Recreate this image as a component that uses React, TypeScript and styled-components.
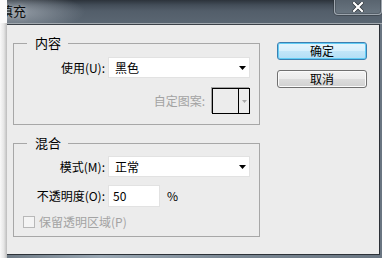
import React from 'react';
import styled, { createGlobalStyle } from 'styled-components';

const Global = createGlobalStyle`
  html, body { margin: 0; padding: 0; background: #fff; }
  body {
    width: 382px; height: 258px; overflow: hidden;
    font-family: "Noto Sans CJK SC", "Noto Sans", "Liberation Sans", sans-serif;
    font-size: 12px; color: #000;
  }
  * { box-sizing: border-box; }
`;

const Screen = styled.div`
  display: flex;
  width: 382px;
  height: 258px;
`;

const Strip = styled.div`
  flex: 0 0 7px;
  display: flex;
  flex-direction: column;
`;

const StripTop = styled.div`
  height: 23px;
  background: #fbfbfb;
`;

const StripBody = styled.div`
  flex: 1;
  background: linear-gradient(to right, #f9f9f9 0%, #e6e6e6 55%, #bcbcbc 100%);
`;

const Window = styled.div`
  flex: 1;
  min-width: 0;
  display: flex;
  flex-direction: column;
  overflow: hidden;
  background: linear-gradient(to right, #6e7a85, #9aa8b4 25%, #7a8793 60%, #6a7682);
`;

const TitleBar = styled.div`
  flex: none;
  height: 24px;
  display: flex;
  align-items: flex-start;
  justify-content: space-between;
  border-bottom: 1px solid #a3aab0;
  background:
    radial-gradient(ellipse 70px 20px at 8px 12px, rgba(175, 182, 190, 0.7), rgba(175, 182, 190, 0) 100%),
    linear-gradient(to bottom, #2c333b 0px, #434d58 5px, #535e6a 11px, #5a6672 23px);
`;

const Title = styled.div`
  margin: 3px 0 0 -7px;
  font-size: 13px;
  line-height: 16px;
  color: #0b0b0b;
  text-shadow: 0 0 5px rgba(255, 255, 255, 0.45);
`;

const CloseButton = styled.div`
  width: 48px;
  height: 16px;
  margin-top: -1px;
  display: flex;
  align-items: center;
  justify-content: center;
  padding-top: 1px;
  border: 1px solid rgba(225, 230, 235, 0.5);
  border-top: none;
  border-radius: 0 0 4px 4px;
  box-shadow: 0 0 0 1px rgba(40, 46, 52, 0.45), inset 0 0 0 1px rgba(40, 46, 52, 0.3);
  background: linear-gradient(to bottom, #58636e, #6a7681);
`;

const Client = styled.div`
  flex: 1;
  display: flex;
  align-items: flex-start;
  margin: 0 2px 3px 0;
  padding: 9px 11px 0 6px;
  background: #ececec;
  border-top: 1px solid #3b4148;
  border-right: 1px solid #2c3137;
  border-bottom: 1px solid #2c3137;
`;

const LeftColumn = styled.div`
  flex: 0 0 247px;
  display: flex;
  flex-direction: column;
`;

const Group = styled.fieldset<{ $gap: number; $pt: number; $pb: number }>`
  margin: ${p => p.$gap}px 0 0 0;
  padding: ${p => p.$pt}px 9px ${p => p.$pb}px 0;
  border: 1px solid #a7a7a7;
  min-width: 0;
`;

const Legend = styled.legend`
  margin-left: 13px;
  padding: 0 7px 0 8px;
  font-size: 13px;
  line-height: 18px;
  color: #000;
`;

const Rows = styled.div<{ $gap: number }>`
  display: flex;
  flex-direction: column;
  gap: ${p => p.$gap}px;
`;

const FieldRow = styled.div`
  display: flex;
  align-items: center;
  gap: 3px;
`;

const Label = styled.div`
  flex: 0 0 91px;
  text-align: right;
  line-height: 16px;
  white-space: nowrap;
`;

const Select = styled.div`
  width: 142px;
  height: 21px;
  display: flex;
  align-items: center;
  justify-content: space-between;
  padding: 0 3px 0 6px;
  background: #fff;
  border: 1px solid #e2e2e2;
  line-height: 16px;
`;

const PatternRow = styled.div`
  display: flex;
  align-items: center;
  justify-content: flex-end;
  gap: 7px;
  height: 27px;
`;

const DisabledText = styled.div`
  color: #a3a3a3;
  line-height: 16px;
  white-space: nowrap;
`;

const PatternBox = styled.div`
  width: 38px;
  height: 26px;
  margin-top: 1px;
  display: flex;
  border: 1px solid #000;
  box-shadow: -1px -1px 0 #a2a2a2;
  background: #ececec;
`;

const Swatch = styled.div`
  flex: 1;
  border-right: 1px solid #000;
`;

const SwatchArrow = styled.div`
  flex: 0 0 10px;
  display: flex;
  align-items: center;
  justify-content: center;
`;

const NumberInput = styled.div`
  width: 52px;
  height: 22px;
  display: flex;
  align-items: center;
  padding-left: 4px;
  background: #fff;
  border: 1px solid #e2e2e2;
  line-height: 16px;
`;

const Unit = styled.div`
  margin-left: 4px;
  line-height: 16px;
`;

const CheckRow = styled.div`
  display: flex;
  align-items: center;
  gap: 4px;
  height: 13px;
  padding-left: 9px;
`;

const CheckBox = styled.div`
  width: 12px;
  height: 12px;
  border: 1px solid #b8b8b8;
  background: #f4f4f4;
`;

const RightColumn = styled.div`
  margin-left: 17px;
  padding-top: 8px;
  display: flex;
  flex-direction: column;
  gap: 10px;
`;

const Button = styled.div<{ $primary?: boolean }>`
  width: 90px;
  height: 18px;
  display: flex;
  align-items: center;
  justify-content: center;
  border-radius: 3px;
  line-height: 16px;
  border: 1px solid ${p => (p.$primary ? '#3c7fb1' : '#707070')};
  box-shadow: ${p => (p.$primary ? 'inset 0 0 0 1px #62cdf5' : 'inset 0 0 0 1px #fbfbfb')};
  background: ${p =>
    p.$primary
      ? 'linear-gradient(to bottom, #e6f5fd 0%, #d6effc 50%, #c2e6f9 50%, #b3def6 100%)'
      : 'linear-gradient(to bottom, #f3f3f3 0%, #ebebeb 50%, #dddddd 50%, #d0d0d0 100%)'};
`;

const Triangle = ({ color, w, h }: { color: string; w: number; h: number }) => (
  <svg width={w} height={h} viewBox={`0 0 ${w} ${h}`}>
    <polygon points={`0,0 ${w},0 ${w / 2},${h}`} fill={color} />
  </svg>
);

const CloseGlyph = () => (
  <svg width="12" height="10" viewBox="0 0 12 10">
    <path d="M2 1 L10 9 M10 1 L2 9" stroke="#2a3036" strokeWidth="3.6" strokeLinecap="square" />
    <path d="M2 1 L10 9 M10 1 L2 9" stroke="#ffffff" strokeWidth="2.2" strokeLinecap="square" />
  </svg>
);

export default function App() {
  return (
    <>
      <Global />
      <Screen>
        <Strip>
          <StripTop />
          <StripBody />
        </Strip>
        <Window>
          <TitleBar>
            <Title>填充</Title>
            <CloseButton>
              <CloseGlyph />
            </CloseButton>
          </TitleBar>
          <Client>
            <LeftColumn>
              <Group $gap={0} $pt={5} $pb={10}>
                <Legend>内容</Legend>
                <Rows $gap={9}>
                  <FieldRow>
                    <Label>使用(U):</Label>
                    <Select>
                      <span>黑色</span>
                      <Triangle color="#000" w={7} h={4} />
                    </Select>
                  </FieldRow>
                  <PatternRow>
                    <DisabledText>自定图案:</DisabledText>
                    <PatternBox>
                      <Swatch />
                      <SwatchArrow>
                        <Triangle color="#a8a8a8" w={5} h={3} />
                      </SwatchArrow>
                    </PatternBox>
                  </PatternRow>
                </Rows>
              </Group>
              <Group $gap={9} $pt={4} $pb={8}>
                <Legend>混合</Legend>
                <Rows $gap={8}>
                  <FieldRow>
                    <Label>模式(M):</Label>
                    <Select>
                      <span>正常</span>
                      <Triangle color="#000" w={7} h={4} />
                    </Select>
                  </FieldRow>
                  <FieldRow>
                    <Label>不透明度(O):</Label>
                    <NumberInput>50</NumberInput>
                    <Unit>%</Unit>
                  </FieldRow>
                  <CheckRow>
                    <CheckBox />
                    <DisabledText>保留透明区域(P)</DisabledText>
                  </CheckRow>
                </Rows>
              </Group>
            </LeftColumn>
            <RightColumn>
              <Button $primary>确定</Button>
              <Button>取消</Button>
            </RightColumn>
          </Client>
        </Window>
      </Screen>
    </>
  );
}
